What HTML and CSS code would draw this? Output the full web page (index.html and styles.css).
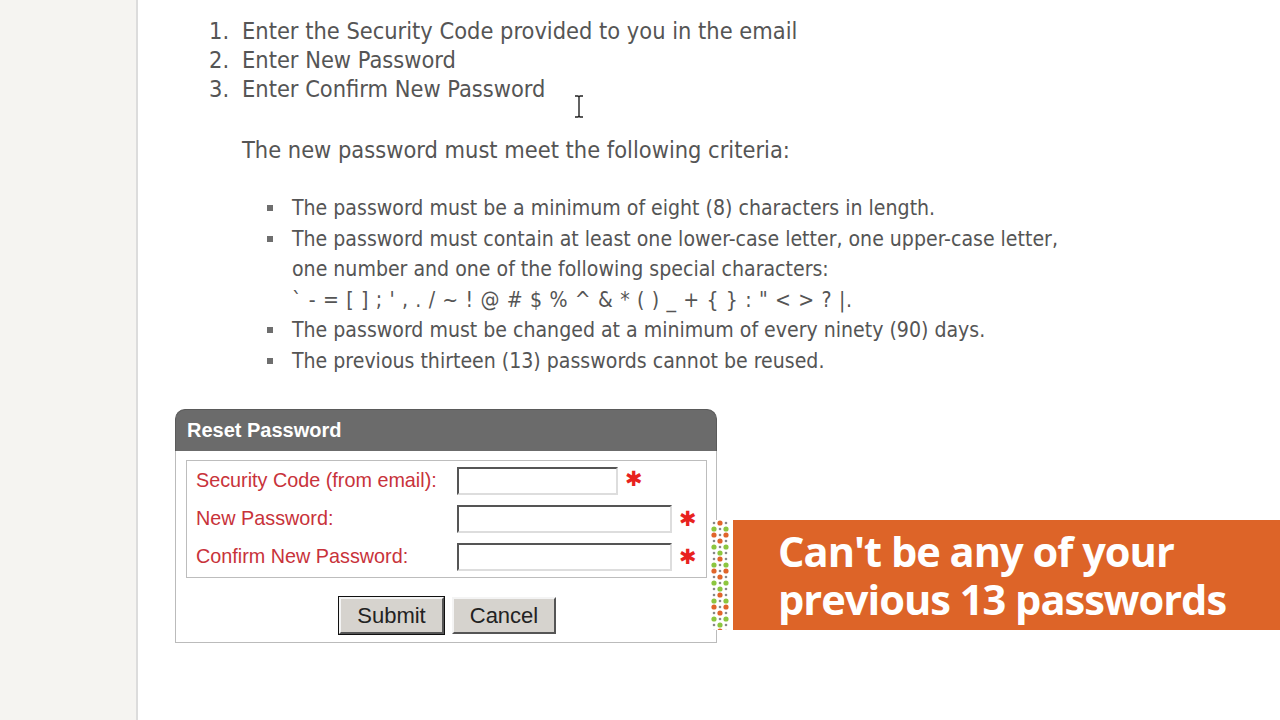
FILE: index.html
```html
<!DOCTYPE html>
<html>
<head>
<meta charset="utf-8">
<link rel="stylesheet" href="styles.css">
</head>
<body>
<div class="page">
  <aside class="sidebar"></aside>
  <main class="main">
    <ol class="steps">
      <li>Enter the Security Code provided to you in the email</li>
      <li>Enter New Password</li>
      <li>Enter Confirm New Password</li>
    </ol>
    <p class="criteria-intro">The new password must meet the following criteria:</p>
    <ul class="criteria">
      <li>The password must be a minimum of eight (8) characters in length.</li>
      <li>The password must contain at least one lower-case letter, one upper-case letter, one number and one of the following special characters:<br><span class="specials">` - = [ ] ; ' , . / ~ ! @ # $ % ^ &amp; * ( ) _ + { } : " &lt; &gt; ? |.</span></li>
      <li>The password must be changed at a minimum of every ninety (90) days.</li>
      <li>The previous thirteen (13) passwords cannot be reused.</li>
    </ul>
    <form class="reset">
      <div class="reset-head">Reset Password</div>
      <div class="reset-body">
        <div class="fields">
          <label class="lbl">Security Code (from email):</label>
          <div class="ctl"><input class="inp short" type="text"><span class="req">✱</span></div>
          <label class="lbl">New Password:</label>
          <div class="ctl"><input class="inp" type="password"><span class="req">✱</span></div>
          <label class="lbl">Confirm New Password:</label>
          <div class="ctl"><input class="inp" type="password"><span class="req">✱</span></div>
        </div>
        <div class="buttons">
          <button type="button" class="btn default">Submit</button>
          <button type="button" class="btn">Cancel</button>
        </div>
      </div>
    </form>
  </main>
</div>
<svg class="cursor" width="12" height="24" viewBox="0 0 12 24"><path d="M2 1h3l1 1 1-1h3M6 2v19M2 22h3l1-1 1 1h3" fill="none" stroke="#222" stroke-width="1.4"/></svg>
<div class="caption">
  <div class="dots">
    <svg width="20" height="110" viewBox="0 0 20 110">
      <defs>
        <pattern id="dp" width="20" height="36" patternUnits="userSpaceOnUse">
          <circle cx="10" cy="3" r="2.6" fill="#e0652a"/>
          <circle cx="4" cy="3" r="1.3" fill="#888"/>
          <circle cx="16" cy="3" r="1.3" fill="#888"/>
          <circle cx="4" cy="9" r="2.6" fill="#8cc63f"/>
          <circle cx="10" cy="9" r="1.3" fill="#888"/>
          <circle cx="16" cy="9" r="2.6" fill="#8cc63f"/>
          <circle cx="4" cy="15" r="2.6" fill="#e0652a"/>
          <circle cx="10" cy="15" r="1.3" fill="#888"/>
          <circle cx="16" cy="15" r="2.6" fill="#e0652a"/>
          <circle cx="10" cy="21" r="2.6" fill="#e0652a"/>
          <circle cx="4" cy="21" r="1.3" fill="#888"/>
          <circle cx="16" cy="21" r="1.3" fill="#888"/>
          <circle cx="4" cy="27" r="2.6" fill="#8cc63f"/>
          <circle cx="10" cy="27" r="1.3" fill="#888"/>
          <circle cx="16" cy="27" r="2.6" fill="#8cc63f"/>
          <circle cx="10" cy="33" r="2.6" fill="#8cc63f"/>
          <circle cx="4" cy="33" r="1.3" fill="#888"/>
          <circle cx="16" cy="33" r="1.3" fill="#888"/>
        </pattern>
      </defs>
      <rect width="20" height="110" fill="url(#dp)"/>
    </svg>
  </div>
  <div class="banner">
    <div class="banner-line">Can't be any of your</div>
    <div class="banner-line">previous 13 passwords</div>
  </div>
</div>
</body>
</html>
```
FILE: styles.css
```css
html, body {
  margin: 0;
  padding: 0;
  background: #fff;
  height: 100%;
}
body {
  font-family: "DejaVu Sans Condensed", "DejaVu Sans", sans-serif;
  color: #555;
  overflow: hidden;
}
.page {
  display: flex;
  min-height: 720px;
}
.sidebar {
  width: 136px;
  flex: none;
  background: #f5f4f1;
  border-right: 2px solid #dcdcdc;
}
.main {
  flex: 1;
  padding-left: 37px;
  padding-top: 17px;
}
.steps {
  margin: 0;
  padding-left: 67px;
  list-style: none;
  counter-reset: step;
  font-size: 23.4px;
  line-height: 29px;
}
.steps li {
  counter-increment: step;
  padding-left: 33px;
  text-indent: -33px;
  margin-left: -33px;
}
.steps li::before {
  content: counter(step) ".";
  display: inline-block;
  width: 33px;
  text-indent: 0;
}
.criteria-intro {
  margin: 32px 0 0 67px;
  font-size: 23.4px;
  line-height: 29px;
}
.criteria {
  list-style: none;
  margin: 28px 0 0 0;
  padding-left: 92px;
  font-size: 21.1px;
  line-height: 30.5px;
  width: 815px;
}
.criteria li {
  padding-left: 25px;
  text-indent: -25px;
}
.criteria li::before {
  content: "";
  display: inline-block;
  width: 6px;
  height: 6px;
  background: #6e6e6e;
  margin-right: 19px;
  vertical-align: 4px;
}
.specials {
  letter-spacing: 0.65px;
  line-height: 29px;
}
.reset {
  margin-top: 33px;
  width: 542px;
  font-family: "Liberation Sans", Arial, sans-serif;
}
.reset-head {
  background: #6b6b6b;
  color: #fff;
  font-weight: bold;
  font-size: 20px;
  height: 41px;
  line-height: 40px;
  padding-left: 11px;
  border-radius: 10px 10px 0 0;
  border: 1px solid #5a5a5a;
  border-bottom: none;
}
.reset-body {
  border: 1px solid #bbb;
  border-top: none;
  padding: 9px 9px 8px 10px;
}
.fields {
  display: grid;
  grid-template-columns: 261px 1fr;
  row-gap: 8px;
  align-items: center;
  border: 1px solid #bdbdbd;
  padding: 5px 0 5px 9px;
}
.lbl {
  color: #c8323a;
  font-size: 19.8px;
  padding-bottom: 2px;
}
.ctl {
  display: flex;
  align-items: center;
  height: 30px;
}
.inp {
  box-sizing: border-box;
  width: 215px;
  height: 28px;
  margin: 0;
  border: 2px solid;
  border-color: #555 #ddd #ddd #555;
  background: #fff;
  padding: 0;
}
.inp.short {
  width: 161px;
}
.req {
  color: #e8221e;
  font-size: 21px;
  margin-left: 7px;
  line-height: 22px;
  font-family: "DejaVu Sans", sans-serif;
}
.short + .req {
  margin-top: -4px;
}
.buttons {
  display: flex;
  justify-content: center;
  gap: 8px;
  padding-top: 19px;
  padding-left: 2px;
}
.btn {
  font-family: "Liberation Sans", Arial, sans-serif;
  font-size: 22px;
  color: #222;
  background: #d6d3ce;
  border: 2px solid;
  border-color: #f4f4f4 #555 #555 #f4f4f4;
  height: 37px;
  padding: 0 14px;
  width: 104px;
}
.btn.default {
  outline: 1px solid #111;
  outline-offset: 0;
  width: 105px;
}
.cursor {
  position: absolute;
  left: 573px;
  top: 95px;
}
.caption {
  position: absolute;
  left: 710px;
  top: 520px;
  display: flex;
  align-items: stretch;
}
.dots {
  width: 23px;
  display: flex;
  align-items: center;
  background: #fff;
}
.banner {
  width: 547px;
  height: 110px;
  box-sizing: border-box;
  background: #dd6428;
  color: #fff;
  font-family: "Open Sans", sans-serif;
  font-weight: 700;
  font-size: 41.6px;
  letter-spacing: -1px;
  padding: 7px 0 0 45px;
}
.banner-line {
  height: 48px;
  line-height: 48px;
}
```
